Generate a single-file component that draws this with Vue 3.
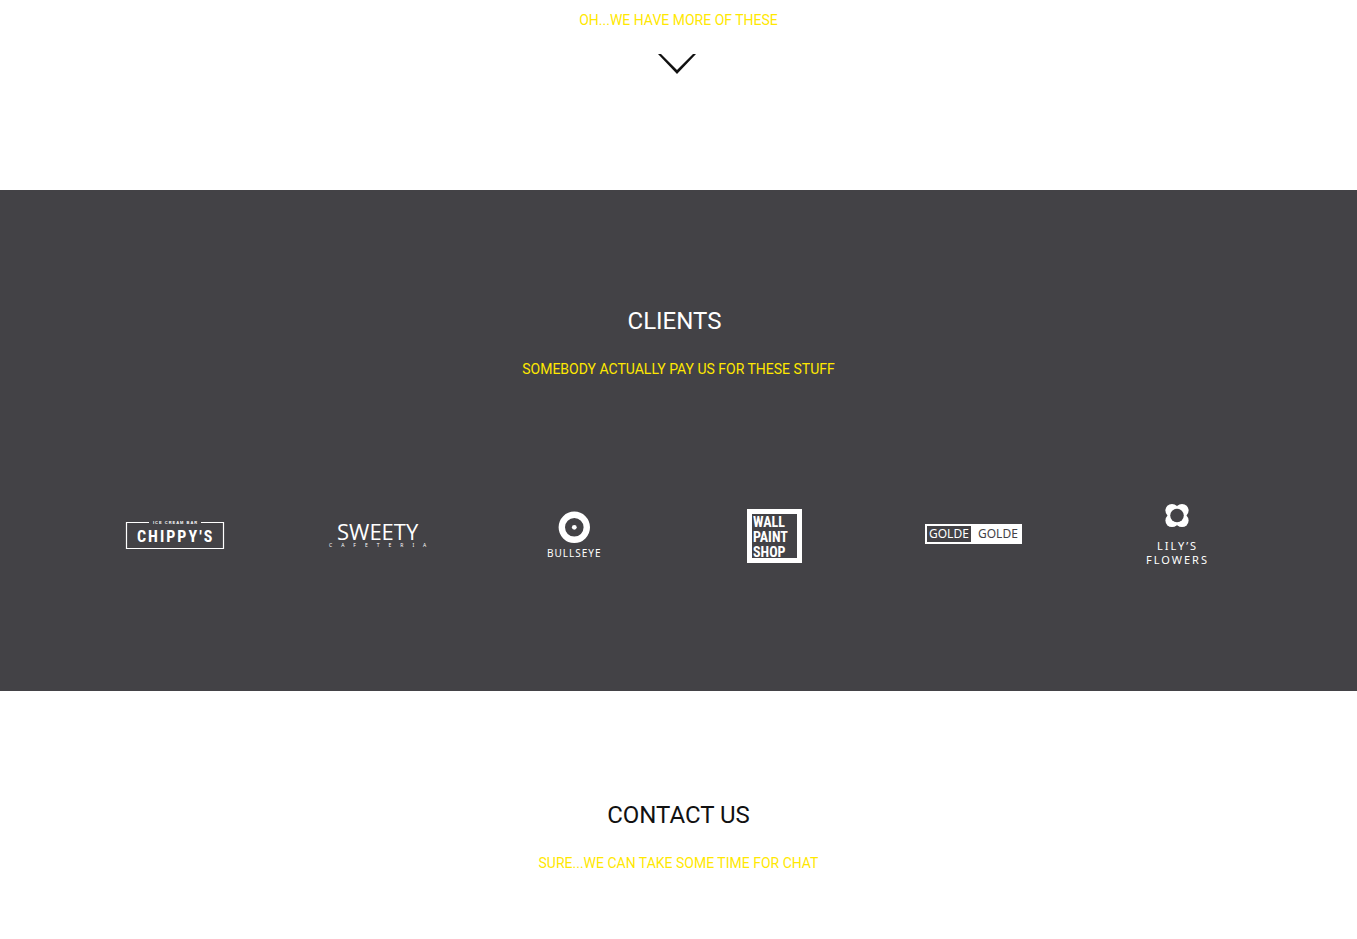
<script setup>
</script>

<template>
  <main class="page">
    <section class="more">
      <a class="more-link" href="#clients">
        <span class="tagline">OH...WE HAVE MORE OF THESE</span>
        <svg class="chevron" viewBox="0 0 40 22" aria-hidden="true">
          <path d="M1 1H4L20 17L36 1H39L20 21Z" fill="#111" />
        </svg>
      </a>
    </section>

    <section id="clients" class="clients">
      <h2 class="title">CLIENTS</h2>
      <p class="tagline">SOMEBODY ACTUALLY PAY US FOR THESE STUFF</p>
      <ul class="logos">
        <li>
          <svg class="logo" viewBox="0 0 120 70">
            <path d="M31 22.500H8.500V48.500H105.500V22.500H83" fill="none" stroke="#fff" stroke-width="1.200" />
            <text class="tiny strong" x="35" y="24">ICE CREAM BAR</text>
            <text class="chippy" x="19" y="42">CHIPPY'S</text>
          </svg>
        </li>
        <li>
          <svg class="logo" viewBox="0 0 120 70">
            <text class="sweety" x="19" y="40">SWEETY</text>
            <text class="tiny spread" x="11" y="47">CAFETERIA</text>
          </svg>
        </li>
        <li>
          <svg class="logo" viewBox="0 0 120 70">
            <circle cx="56.300" cy="27.300" r="12.500" fill="none" stroke="#fff" stroke-width="6.400" />
            <circle cx="56.300" cy="27.300" r="2.400" fill="#fff" />
            <text class="caption" x="29" y="57">BULLSEYE</text>
          </svg>
        </li>
        <li>
          <svg class="logo" viewBox="0 0 120 70">
            <path fill="#fff" fill-rule="evenodd" d="M29 9H84V63H29ZM34 14V58H79V14Z" />
            <text class="wall" x="35" y="27">WALL</text>
            <text class="wall" x="35" y="42">PAINT</text>
            <text class="wall" x="35" y="57">SHOP</text>
          </svg>
        </li>
        <li>
          <svg class="logo" viewBox="0 0 120 70">
            <rect x="7" y="24" width="97" height="20" fill="#fff" />
            <rect x="9" y="26" width="44" height="16" fill="#434246" />
            <text class="golde" x="11" y="38">GOLDE</text>
            <text class="golde dark" x="60" y="38">GOLDE</text>
          </svg>
        </li>
        <li>
          <svg class="logo" viewBox="0 0 120 70">
            <g fill="#fff">
              <circle cx="54" cy="10.500" r="6.600" />
              <circle cx="64" cy="10.500" r="6.600" />
              <circle cx="54" cy="20.500" r="6.600" />
              <circle cx="64" cy="20.500" r="6.600" />
            </g>
            <circle cx="59" cy="15.500" r="6.800" fill="#434246" />
            <text class="caption lily" x="39" y="50">LILY’S</text>
            <text class="caption lily" x="28" y="64">FLOWERS</text>
          </svg>
        </li>
      </ul>
    </section>

    <section class="contact">
      <h2 class="title">CONTACT US</h2>
      <p class="tagline">SURE...WE CAN TAKE SOME TIME FOR CHAT</p>
    </section>
  </main>
</template>

<style>
body {
  margin: 0;
  background: #fff;
}
</style>

<style scoped>
.page {
  font-family: Roboto, "Liberation Sans", sans-serif;
  color: #111;
  text-align: center;
}
.more {
  padding: 8px 0 112px;
}
.more-link {
  display: flex;
  flex-direction: column;
  align-items: center;
  color: inherit;
  text-decoration: none;
}
.chevron {
  width: 40px;
  height: 22px;
  margin: 21px 3px 3px 0;
}
.tagline {
  margin: 0;
  font-size: 14px;
  line-height: 24px;
  color: #ffe800;
}
.title {
  margin: 0 0 20px;
  font-size: 24px;
  line-height: 32px;
  font-weight: 400;
}
.clients {
  padding: 115px 0 121px;
  background: #434246;
}
.clients .title {
  color: #fff;
  padding-right: 8px;
}
.logos {
  display: grid;
  grid-template-columns: repeat(6, 1fr);
  max-width: 1200px;
  margin: 119px auto 0;
  padding: 0 1px 0 0;
  list-style: none;
}
.logo {
  display: block;
  width: 120px;
  height: 70px;
  margin: 0 auto;
}
.logo text {
  fill: #fff;
  font-family: "Noto Sans", "Open Sans", sans-serif;
}
.logo .tiny {
  font-size: 4px;
}
.logo .strong {
  font-family: "Liberation Sans", sans-serif;
  font-weight: 700;
  letter-spacing: 1px;
}
.logo .spread {
  font-size: 5px;
  letter-spacing: 9px;
}
.logo .chippy {
  font-family: "Roboto Condensed", Roboto, sans-serif;
  font-size: 16px;
  font-weight: 700;
  letter-spacing: 2px;
}
.logo .sweety {
  font-family: "Open Sans", "Noto Sans", sans-serif;
  font-size: 22px;
}
.logo .caption {
  font-size: 10px;
  letter-spacing: 1px;
}
.logo .lily {
  font-size: 11px;
  letter-spacing: 2px;
}
.logo .wall {
  font-family: "Roboto Condensed", Roboto, sans-serif;
  font-size: 14px;
  font-weight: 700;
}
.logo .golde {
  font-size: 12px;
}
.logo .dark {
  fill: #434246;
}
.contact {
  padding: 108px 0 64px;
}
</style>
